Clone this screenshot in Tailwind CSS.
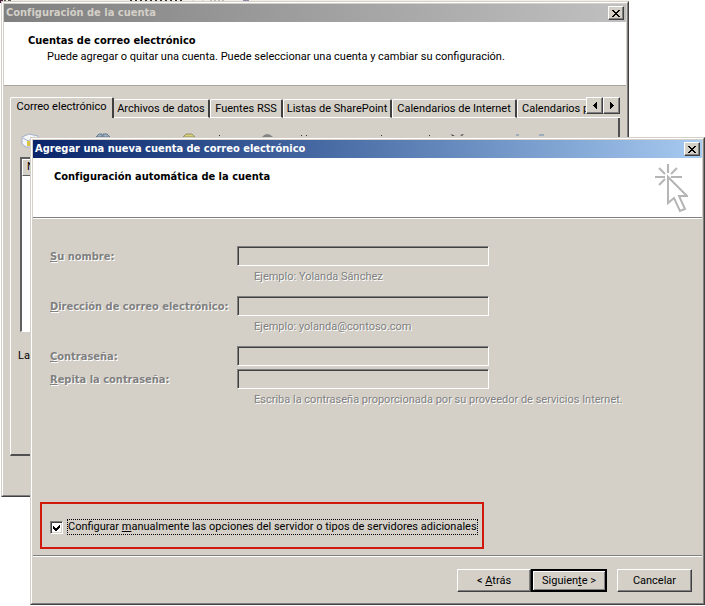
<!DOCTYPE html>
<html lang="es">
<head>
<meta charset="utf-8">
<title>Agregar una nueva cuenta de correo electrónico</title>
<script src="https://cdn.jsdelivr.net/npm/@tailwindcss/browser@4"></script>
</head>
<body class="relative min-h-screen overflow-hidden bg-white font-['Roboto',sans-serif] text-[11px] leading-[14px] text-black">

<!-- Sliver of the application behind the dialogs -->
<svg class="block h-[3px] w-[629px]" viewBox="0 0 629 3" aria-hidden="true">
  <rect width="629" height="3" fill="#f1efe8"/>
  <path d="M0 0h3v3H0z" fill="#4a1f3c"/>
  <path d="M4 0h2v1H4zM8 0h3v1H8z" fill="#555"/>
  <path d="M130 0.5h54" stroke="#333" stroke-dasharray="2 3"/>
  <path d="M193 0v2M203 0v2" stroke="#c8c4bc"/>
  <path d="M210 0.5h14" stroke="#bbb" stroke-dasharray="2 2"/>
  <path d="M243 0h6v1h-6z" fill="#8a8aa8"/>
</svg>

<!-- Account settings window -->
<section aria-labelledby="back-title" class="absolute top-[1px] left-[1px] w-[628px] border border-t-[#d4d0c8] border-r-[#404040] border-b-[#404040] border-l-[#d4d0c8] bg-[#d4d0c8]">
  <div class="border border-t-white border-r-[#808080] border-b-[#808080] border-l-white px-[1px] pt-[1px] pb-[39px]">
    <header class="flex h-[18px] items-center justify-between bg-linear-to-r from-[#808080] to-[#c0c0c0] pr-[2px] pl-[2px]">
      <h2 id="back-title" class="font-['DejaVu_Sans_Condensed',sans-serif] font-bold text-[#d4d0c8]">Configuración de la cuenta</h2>
      <button aria-label="Cerrar" class="flex h-[14px] w-4 items-center justify-center border border-t-white border-r-[#404040] border-b-[#404040] border-l-white bg-[#d4d0c8] shadow-[inset_-1px_-1px_0_#808080]">
        <svg class="h-[7px] w-2" viewBox="0 0 8 7" shape-rendering="crispEdges" aria-hidden="true"><path d="M0 0h2v1h1v1h2V1h1V0h2v1H7v1H6v1H5v1h1v1h1v1h1v1H6V6H5V5H3v1H2v1H0V6h1V5h1V4h1V3H2V2H1V1H0z"/></svg>
      </button>
    </header>
    <div class="h-16 border-b border-[#a8a59e] bg-white pt-3 pl-6">
      <h3 class="font-['DejaVu_Sans_Condensed',sans-serif] font-bold">Cuentas de correo electrónico</h3>
      <p class="pt-[2px] pl-[19px]">Puede agregar o quitar una cuenta. Puede seleccionar una cuenta y cambiar su configuración.</p>
    </div>
    <div class="pt-[11px] pr-[6px] pl-[6px]">
      <div role="tablist" class="relative flex h-[21px] items-end overflow-hidden whitespace-nowrap">
        <button role="tab" aria-selected="true" class="h-[21px] w-[104px] shrink-0 rounded-t-[2px] border-t border-r-2 border-l border-t-white border-r-[#404040] border-l-white pb-[2px]">Correo electrónico</button>
        <button role="tab" class="h-[19px] w-[96px] shrink-0 rounded-t-[2px] border-t border-r-2 border-b border-t-white border-r-[#404040] border-b-white">Archivos de datos</button>
        <button role="tab" class="h-[19px] w-[73px] shrink-0 rounded-t-[2px] border-t border-r-2 border-b border-l border-t-white border-r-[#404040] border-b-white border-l-white">Fuentes RSS</button>
        <button role="tab" class="h-[19px] w-[109px] shrink-0 rounded-t-[2px] border-t border-r-2 border-b border-l border-t-white border-r-[#404040] border-b-white border-l-white">Listas de SharePoint</button>
        <button role="tab" class="h-[19px] w-[125px] shrink-0 rounded-t-[2px] border-t border-r-2 border-b border-l border-t-white border-r-[#404040] border-b-white border-l-white">Calendarios de Internet</button>
        <button role="tab" class="h-[19px] min-w-0 flex-1 rounded-tl-[2px] border-t border-b border-l border-white pl-[4px] text-left">Calendarios p</button>
        <div class="absolute top-0 right-0 flex bg-[#d4d0c8]">
          <button aria-label="Pestañas anteriores" class="flex h-[17px] w-[17px] items-center justify-center border border-t-white border-r-[#404040] border-b-[#404040] border-l-white shadow-[inset_-1px_-1px_0_#808080]">
            <svg class="h-[7px] w-1" viewBox="0 0 4 7" shape-rendering="crispEdges" aria-hidden="true"><path d="M4 0v7H3V6H2V5H1V4H0V3h1V2h1V1h1V0z"/></svg>
          </button>
          <button aria-label="Pestañas siguientes" class="flex h-[17px] w-[17px] items-center justify-center border border-t-white border-r-[#404040] border-b-[#404040] border-l-white shadow-[inset_-1px_-1px_0_#808080]">
            <svg class="h-[7px] w-1" viewBox="0 0 4 7" shape-rendering="crispEdges" aria-hidden="true"><path d="M0 0v7h1V6h1V5h1V4h1V3H3V2H2V1H1V0z"/></svg>
          </button>
        </div>
      </div>
      <div role="tabpanel" class="h-[338px] border-r-2 border-b-2 border-l border-r-[#505050] border-b-[#505050] border-l-white pt-[14px] pl-[9px]">
        <svg class="block h-[18px] w-[580px]" viewBox="0 0 580 18" aria-hidden="true">
          <path d="M2 5l7-3 9 2v11H6l-4-3z" fill="#f4f6fa" stroke="#a3aec6"/>
          <path d="M3 6l5 3 7-4" fill="none" stroke="#a3aec6"/>
          <path d="M7 9h4v5H7z" fill="#d8c440"/>
          <path d="M76 5l3-3h3v3zM83 5V2h4l3 3z" fill="#9fb2c2" stroke="#62788c"/>
          <path d="M163 5l3-3h6l3 3z" fill="#d8cf72" stroke="#94906a"/>
          <path d="M242 5q5-6 11 0z" fill="#858585"/>
          <path d="M199 3h1v1h-1zM281 3h1v1h-1zM286 3h1v1h-1zM361 3h1v1h-1zM409 3h1v1h-1z" fill="#333"/>
          <path d="M431 2l4 2h-3zM440 3l4-1-2 2z" fill="#444"/>
          <path d="M496 3h3M519 3h5" stroke="#6687ac"/>
        </svg>
        <div class="mt-[7px] h-[175px] border-t-2 border-b border-l-2 border-t-[#606060] border-b-white border-l-[#606060] bg-white">
          <div class="h-[17px] border-t border-b border-l border-t-white border-b-[#606060] border-l-white bg-[#d4d0c8] pl-1">N</div>
        </div>
        <p class="-ml-[2px] pt-[17px]">La</p>
      </div>
    </div>
  </div>
</section>

<!-- Add account wizard -->
<main aria-labelledby="front-title" class="absolute top-[137px] right-0 left-[30px] border border-t-[#d4d0c8] border-r-[#404040] border-b-[#404040] border-l-[#d4d0c8] bg-[#d4d0c8]">
  <form class="border border-t-white border-r-[#808080] border-b-[#808080] border-l-white px-[1px] pt-[1px] pb-[11px]" onsubmit="return false">
    <header class="flex h-[18px] items-center justify-between bg-linear-to-r from-[#0a246a] to-[#a6caf0] pr-[2px] pl-[2px]">
      <h1 id="front-title" class="font-['DejaVu_Sans_Condensed',sans-serif] font-bold text-white">Agregar una nueva cuenta de correo electrónico</h1>
      <button type="button" aria-label="Cerrar" class="flex h-[14px] w-4 items-center justify-center border border-t-white border-r-[#404040] border-b-[#404040] border-l-white bg-[#d4d0c8] shadow-[inset_-1px_-1px_0_#808080]">
        <svg class="h-[7px] w-2" viewBox="0 0 8 7" shape-rendering="crispEdges" aria-hidden="true"><path d="M0 0h2v1h1v1h2V1h1V0h2v1H7v1H6v1H5v1h1v1h1v1h1v1H6V6H5V5H3v1H2v1H0V6h1V5h1V4h1V3H2V2H1V1H0z"/></svg>
      </button>
    </header>
    <div class="flex h-[59px] items-start justify-between bg-white pt-[5px] pr-[14px] pl-[21px]">
      <h2 class="pt-[7px] font-['DejaVu_Sans_Condensed',sans-serif] font-bold">Configuración automática de la cuenta</h2>
      <svg class="h-[50px] w-[34px]" viewBox="0 0 34 50" fill="none" stroke="#b5b5b5" stroke-width="2" aria-hidden="true">
        <path d="M14 1v9M1 14h10M17 14h11M5 5l6 6M23 5l-6 6M5 22l6-6"/>
        <path d="M14 14v26l6-5 6 13 5-2-6-13h8z"/>
      </svg>
    </div>
    <div class="h-[2px] border-t border-b border-t-[#808080] border-b-white"></div>

    <div class="grid grid-cols-[187px_252px_1fr] pt-[27px] pl-[17px] leading-[22px] text-[#808080] [text-shadow:1px_1px_0_#fff]">
      <label for="nombre" class="h-5 font-['DejaVu_Sans_Condensed',sans-serif] font-bold"><u>S</u>u nombre:</label>
      <input id="nombre" type="text" disabled class="h-5 border border-t-[#808080] border-r-white border-b-white border-l-[#808080] shadow-[inset_1px_1px_0_#404040]">
      <p class="col-span-2 col-start-2 mb-[10px] h-5 pl-[17px]">Ejemplo: Yolanda Sánchez</p>

      <label for="correo" class="h-5 font-['DejaVu_Sans_Condensed',sans-serif] font-bold"><u>D</u>irección de correo electrónico:</label>
      <input id="correo" type="email" disabled class="h-5 border border-t-[#808080] border-r-white border-b-white border-l-[#808080] shadow-[inset_1px_1px_0_#404040]">
      <p class="col-span-2 col-start-2 mb-[10px] h-5 pl-[17px]">Ejemplo: yolanda@contoso.com</p>

      <label for="clave" class="mb-[3px] h-5 font-['DejaVu_Sans_Condensed',sans-serif] font-bold"><u>C</u>ontraseña:</label>
      <input id="clave" type="password" disabled class="h-5 border border-t-[#808080] border-r-white border-b-white border-l-[#808080] shadow-[inset_1px_1px_0_#404040]">

      <label for="clave2" class="col-start-1 h-5 font-['DejaVu_Sans_Condensed',sans-serif] font-bold"><u>R</u>epita la contraseña:</label>
      <input id="clave2" type="password" disabled class="h-5 border border-t-[#808080] border-r-white border-b-white border-l-[#808080] shadow-[inset_1px_1px_0_#404040]">
      <p class="col-span-2 col-start-2 h-5 pl-[17px]">Escriba la contraseña proporcionada por su proveedor de servicios Internet.</p>
    </div>

    <div class="mt-[93px] ml-[7px] flex h-[47px] w-[444px] items-center border-2 border-[#d0180c] pt-[3px] pl-2">
      <div class="relative flex h-[13px] w-[13px]">
        <input id="manual" type="checkbox" checked class="peer h-[13px] w-[13px] appearance-none border border-t-[#808080] border-r-white border-b-white border-l-[#808080] bg-white shadow-[inset_1px_1px_0_#404040,inset_-1px_-1px_0_#d4d0c8]">
        <svg class="pointer-events-none invisible absolute top-[3px] left-[3px] h-[7px] w-[7px] peer-checked:visible" viewBox="0 0 7 7" shape-rendering="crispEdges" aria-hidden="true"><path d="M0 2v3l2 2h1l4-4V0L3 4H2z"/></svg>
      </div>
      <label for="manual" class="ml-1 border border-dotted border-black whitespace-nowrap">Configurar <u>m</u>anualmente las opciones del servidor o tipos de servidores adicionales</label>
    </div>

    <div class="mt-[6px] h-[2px] border-t border-b border-t-[#808080] border-b-white"></div>

    <footer class="flex justify-end pt-3 pr-[10px]">
      <button type="button" class="h-[23px] w-[74px] border border-t-white border-r-[#404040] border-b-[#404040] border-l-white shadow-[inset_-1px_-1px_0_#808080]">&lt; <u>A</u>trás</button>
      <button type="submit" class="h-[23px] w-[76px] border-2 border-black shadow-[inset_1px_1px_0_#fff,inset_-1px_-1px_0_#808080]">Siguien<u>t</u>e &gt;</button>
      <button type="button" class="ml-[10px] h-[23px] w-[75px] border border-t-white border-r-[#404040] border-b-[#404040] border-l-white shadow-[inset_-1px_-1px_0_#808080]">Cancelar</button>
    </footer>
  </form>
</main>
</body>
</html>
